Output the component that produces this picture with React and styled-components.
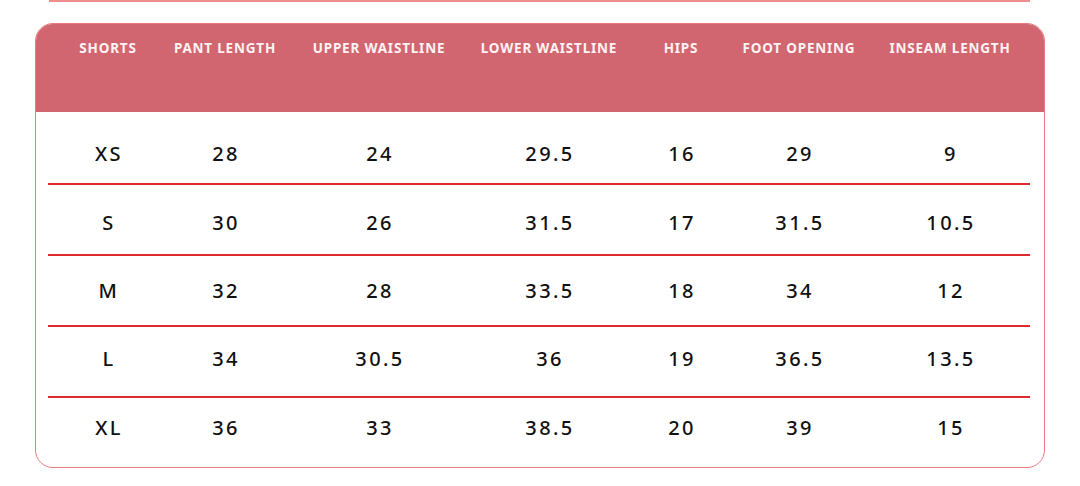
import styled, { createGlobalStyle } from 'styled-components';

const GlobalStyle = createGlobalStyle`
	html, body {
		margin: 0;
		padding: 0;
		background: #ffffff;
	}
	body {
		font-family: "Noto Sans", "Open Sans", sans-serif;
	}
`;

const columns = ['SHORTS', 'PANT LENGTH', 'UPPER WAISTLINE', 'LOWER WAISTLINE', 'HIPS', 'FOOT OPENING', 'INSEAM LENGTH'];

const rows = [
	['XS', '28', '24', '29.5', '16', '29', '9'],
	['S', '30', '26', '31.5', '17', '31.5', '10.5'],
	['M', '32', '28', '33.5', '18', '34', '12'],
	['L', '34', '30.5', '36', '19', '36.5', '13.5'],
	['XL', '36', '33', '38.5', '20', '39', '15'],
];

const Page = styled.div`
	width: 1080px;
	padding: 0 35px;
	box-sizing: border-box;
`;

const PrevCardEdge = styled.div`
	height: 2px;
	margin: 0 15px 0 14px;
	background: #f08c8c;
`;

const Card = styled.div`
	margin-top: 21px;
	width: 1010px;
	height: 445px;
	box-sizing: border-box;
	border: 1.5px solid #ea7a80;
	border-radius: 18px;
	overflow: hidden;
`;

const Grid = styled.div`
	display: grid;
	grid-template-columns: 120px 114px 194px 146px 118px 118px 1fr;
	align-items: center;
	margin: 0 14px 0 12px;
`;

const Head = styled.div`
	height: 88px;
	background: #d26670;
	box-sizing: border-box;
	padding-top: 15px;
`;

const HeadCell = styled.div`
	color: #fdf3f4;
	font-size: 13.5px;
	font-weight: 700;
	letter-spacing: 0.8px;
	line-height: 19px;
	text-align: center;
	white-space: nowrap;
	padding-left: ${p => (p.$last ? '12px' : '0')};
`;

// text sits a little high or low in each row: $shift nudges it
const Row = styled(Grid)`
	height: ${p => (p.$first ? '73px' : '71px')};
	box-sizing: border-box;
	padding-top: ${p => Math.max(0, p.$shift * 2)}px;
	padding-bottom: ${p => Math.max(0, -p.$shift * 2)}px;
	border-bottom: ${p => (p.$last ? 'none' : '2px solid #de2a2d')};
`;

const Cell = styled.div`
	color: #111111;
	font-size: 20px;
	font-weight: 500;
	letter-spacing: 2.4px;
	text-align: center;
	padding-left: ${p => (p.$last ? '14px' : '2px')};
`;

export default function App() {
	return (
		<Page>
			<GlobalStyle />
			<PrevCardEdge />
			<Card>
				<Head>
					<Grid>
						{columns.map((c, i) => (
							<HeadCell key={c} $last={i === columns.length - 1}>{c}</HeadCell>
						))}
					</Grid>
				</Head>
				<div>
					{rows.map((r, ri) => (
						<Row
							key={r[0]}
							$first={ri === 0}
							$last={ri === rows.length - 1}
							$shift={6 - ri * 3}
						>
							{r.map((v, i) => (
								<Cell key={i} $last={i === r.length - 1}>{v}</Cell>
							))}
						</Row>
					))}
				</div>
			</Card>
		</Page>
	);
}
